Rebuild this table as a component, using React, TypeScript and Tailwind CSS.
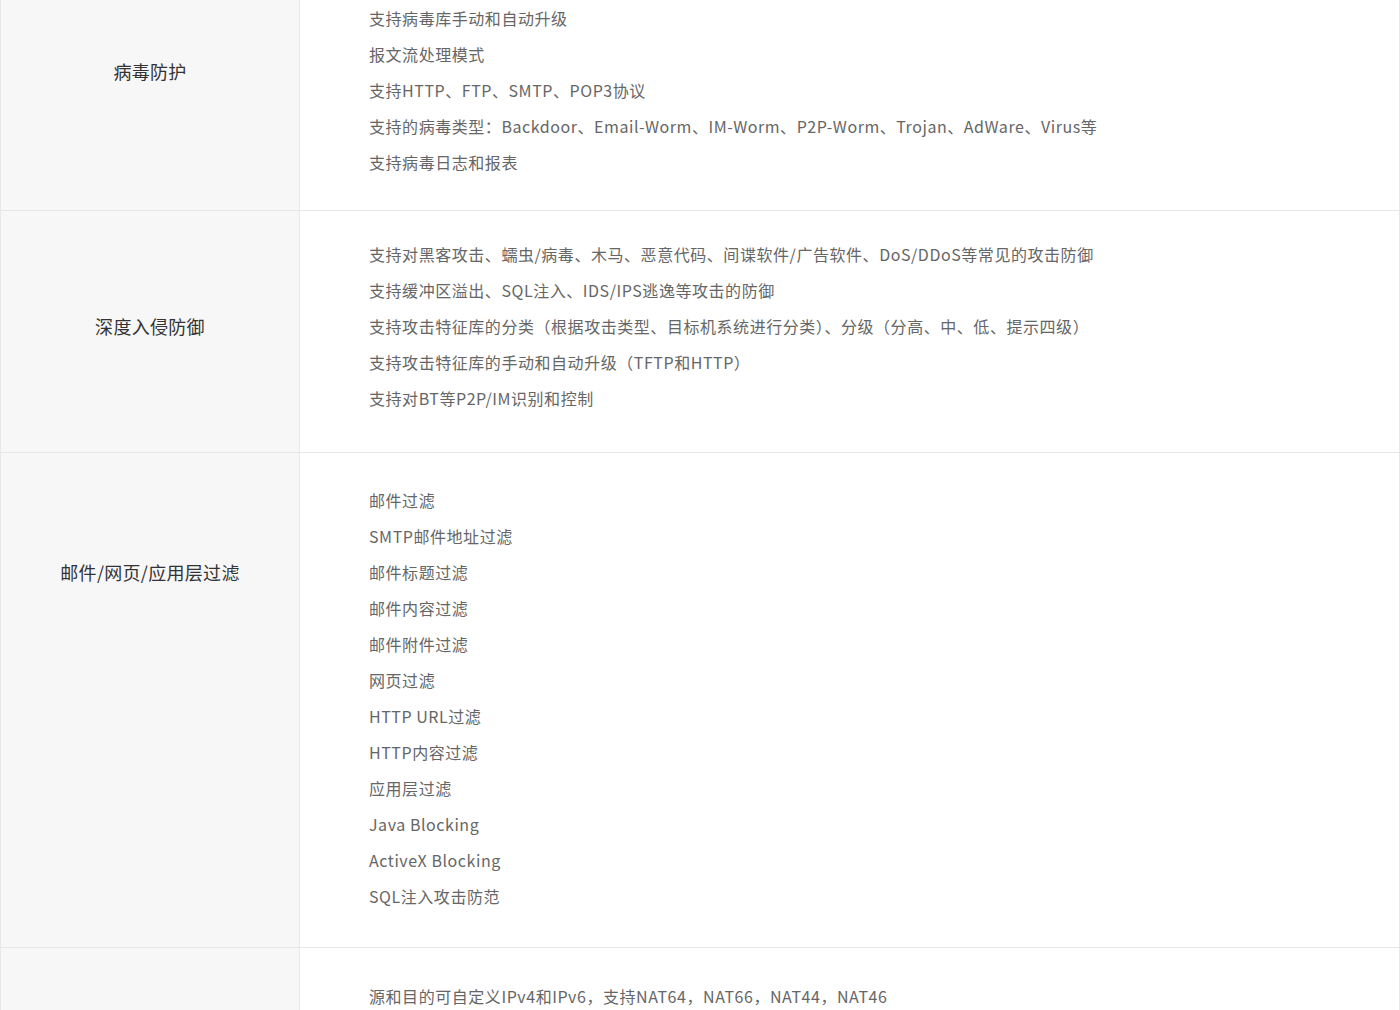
import React from "react";

interface FeatureRow {
    label: string;
    items: string[];
    pad: string; // list padding
    labelPad: string; // label offset from row top
}

const ROWS: FeatureRow[] = [
    {
        label: "病毒防护",
        pad: "pt-[31px] pb-[30px]",
        labelPad: "pt-[90px]",
        items: [
            "支持病毒库手动和自动升级",
            "报文流处理模式",
            "支持HTTP、FTP、SMTP、POP3协议",
            "支持的病毒类型：Backdoor、Email-Worm、IM-Worm、P2P-Worm、Trojan、AdWare、Virus等",
            "支持病毒日志和报表",
        ],
    },
    {
        label: "深度入侵防御",
        pad: "pt-[25px] pb-[36px]",
        labelPad: "pt-[103px]",
        items: [
            "支持对黑客攻击、蠕虫/病毒、木马、恶意代码、间谍软件/广告软件、DoS/DDoS等常见的攻击防御",
            "支持缓冲区溢出、SQL注入、IDS/IPS逃逸等攻击的防御",
            "支持攻击特征库的分类（根据攻击类型、目标机系统进行分类）、分级（分高、中、低、提示四级）",
            "支持攻击特征库的手动和自动升级（TFTP和HTTP）",
            "支持对BT等P2P/IM识别和控制",
        ],
    },
    {
        label: "邮件/网页/应用层过滤",
        pad: "pt-[29px] pb-[33px]",
        labelPad: "pt-[107px]",
        items: [
            "邮件过滤",
            "SMTP邮件地址过滤",
            "邮件标题过滤",
            "邮件内容过滤",
            "邮件附件过滤",
            "网页过滤",
            "HTTP URL过滤",
            "HTTP内容过滤",
            "应用层过滤",
            "Java Blocking",
            "ActiveX Blocking",
            "SQL注入攻击防范",
        ],
    },
    {
        label: "",
        pad: "pt-[30px] pb-[30px]",
        labelPad: "pt-[107px]",
        items: ["源和目的可自定义IPv4和IPv6，支持NAT64，NAT66，NAT44，NAT46"],
    },
];

function Row({ row }: { row: FeatureRow }) {
    return (
        <div className="flex border-b border-[#e6e6e6]">
            {/* label cell */}
            <div
                className={`w-[300px] shrink-0 text-center bg-[#f7f7f7] border-l border-r border-[#e8e8e8] text-[18px] leading-[24px] text-[#333] tracking-[0.3px] ${row.labelPad}`}
            >
                {row.label}
            </div>
            {/* feature list */}
            <ul className={`flex-1 pl-[69px] border-r border-[#e8e8e8] ${row.pad}`}>
                {row.items.map((item) => (
                    <li key={item} className="h-[36px] leading-[36px] text-[16px] text-[#666] tracking-[0.55px]">
                        {item}
                    </li>
                ))}
            </ul>
        </div>
    );
}

export default function App() {
    return (
        <div
            className="w-[1400px] h-[1010px] overflow-hidden bg-white"
            style={{ fontFamily: '"Noto Sans CJK SC", "Noto Sans", sans-serif' }}
        >
            <div className="-mt-[31px]">
                {ROWS.map((row, i) => (
                    <Row key={i} row={row} />
                ))}
            </div>
        </div>
    );
}
